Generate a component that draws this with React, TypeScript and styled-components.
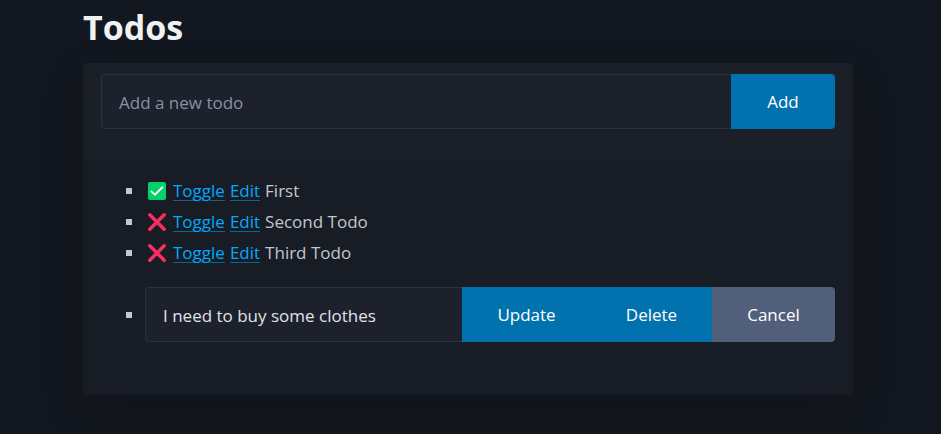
import React, { useState } from "react";
import styled, { createGlobalStyle } from "styled-components";

const GlobalStyle = createGlobalStyle`
  *, *::before, *::after { box-sizing: border-box; }
  body {
    margin: 0;
    background: #13171f;
    color: #c2c7d0;
    font-family: "Open Sans", "Noto Sans", sans-serif;
    font-size: 17px;
    line-height: 27px;
  }
`;

const Page = styled.main`
  max-width: 775px;
  margin: 0 auto;
  padding: 6px 5px 40px 0;
`;

const Title = styled.h1`
  margin: 0 0 14px;
  color: #f0f1f3;
  font-size: 34px;
  font-weight: 700;
  line-height: 43px;
`;

const Card = styled.article`
  border-radius: 4px;
  background: #181c25;
  box-shadow: 0 16px 48px rgba(7, 9, 12, 0.16);
`;

const CardHeader = styled.header`
  padding: 11px 18px 30px;
  border-radius: 4px 4px 0 0;
  background: #1a1f28;
`;

const Group = styled.form`
  display: flex;
  flex: 1;
  min-width: 0;
  height: 55px;
  border-radius: 4px;
`;

const TextBox = styled.input`
  flex: 1;
  min-width: 0;
  padding: 2px 17px 0;
  border: 1px solid #2a3140;
  border-right: 0;
  border-radius: 4px 0 0 4px;
  outline: none;
  background: #1c212c;
  color: #e0e3e7;
  font: inherit;
  &::placeholder { color: #8891a4; opacity: 1; }
`;

const Button = styled.button<{ $secondary?: boolean; $width: number }>`
  flex: 0 0 ${(p) => p.$width}px;
  padding: 0;
  border: 0;
  background: ${(p) => (p.$secondary ? "#525f7a" : "#0172ad")};
  color: #fff;
  font: inherit;
  cursor: pointer;
  &:last-child { border-radius: 0 4px 4px 0; }
`;

const List = styled.ul`
  display: flex;
  flex-direction: column;
  gap: 4px;
  margin: 0;
  padding: 18px 18px 53px 43px;
  list-style: none;
`;

const Item = styled.li<{ $editing?: boolean }>`
  display: flex;
  align-items: center;
  margin-top: ${(p) => (p.$editing ? 17 : 0)}px;
  &::before {
    content: "";
    flex: 0 0 6px;
    height: 6px;
    margin-right: ${(p) => (p.$editing ? 13 : 16)}px;
    background: #c2c7d0;
  }
`;

const Status = styled.svg`
  flex: none;
  width: 18px;
  height: 18px;
  margin-right: 7px;
`;

const Action = styled.a`
  margin-right: 5px;
  color: #01aaff;
  text-decoration: underline;
  text-decoration-color: rgba(1, 170, 255, 0.5);
  text-decoration-thickness: 1px;
  text-underline-offset: 3px;
`;

const Done = () => (
  <Status viewBox="0 0 18 18" role="img" aria-label="Done">
    <rect width="18" height="18" rx="2" fill="#00d26a" />
    <path d="M3.4 9.4 6.9 12.8 14.4 5.3" fill="none" stroke="#f4f4f4" strokeWidth="2" strokeLinecap="round" strokeLinejoin="round" />
  </Status>
);

const Pending = () => (
  <Status viewBox="0 0 18 18" role="img" aria-label="Not done">
    <path d="M1.8 1.8 16.2 16.2M16.2 1.8 1.8 16.2" fill="none" stroke="#f92f60" strokeWidth="3.4" strokeLinecap="round" />
  </Status>
);

const initialTodos = [
  { text: "First", done: true },
  { text: "Second Todo", done: false },
  { text: "Third Todo", done: false },
];

export default function App() {
  const [todos, setTodos] = useState(initialTodos);
  const [draft, setDraft] = useState("I need to buy some clothes");
  const toggle = (index: number) =>
    setTodos(todos.map((t, i) => (i === index ? { ...t, done: !t.done } : t)));

  return (
    <>
      <GlobalStyle />
      <Page>
        <Title>Todos</Title>
        <Card>
          <CardHeader>
            <Group onSubmit={(e) => e.preventDefault()}>
              <TextBox aria-label="Add a new todo" placeholder="Add a new todo" />
              <Button type="submit" $width={104}>Add</Button>
            </Group>
          </CardHeader>
          <List>
            {todos.map((todo, index) => (
              <Item key={todo.text}>
                {todo.done ? <Done /> : <Pending />}
                <Action href="#toggle" onClick={(e) => { e.preventDefault(); toggle(index); }}>Toggle</Action>
                <Action href="#edit">Edit</Action>
                <span>{todo.text}</span>
              </Item>
            ))}
            <Item $editing>
              <Group onSubmit={(e) => e.preventDefault()}>
                <TextBox aria-label="Edit todo" value={draft} onChange={(e) => setDraft(e.target.value)} />
                <Button type="submit" $width={129}>Update</Button>
                <Button type="button" $width={121}>Delete</Button>
                <Button type="button" $secondary $width={123}>Cancel</Button>
              </Group>
            </Item>
          </List>
        </Card>
      </Page>
    </>
  );
}
